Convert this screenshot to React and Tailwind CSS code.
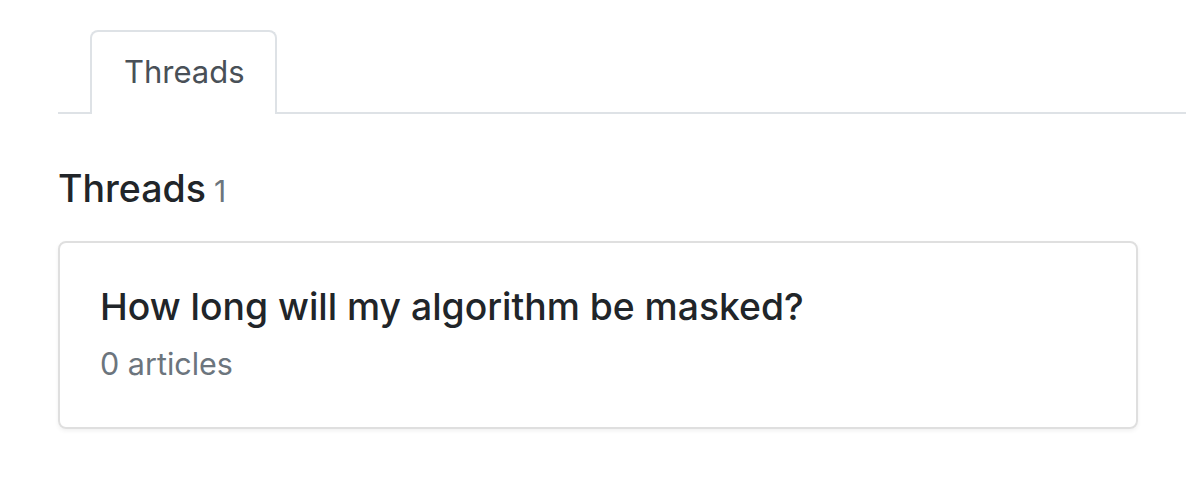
import React from 'react'

const threads = [{ title: 'How long will my algorithm be masked?', articles: 0 }]

const App = () => {
  return (
    <div className="w-[1186px] h-[484px] bg-white pl-[58px] pt-[30px] font-['Inter',sans-serif] text-[#212529]">
      <div className="flex border-b-2 border-[#dee2e6] pl-[32px]">
        <div className="-mb-[2px] pl-[32px] pr-[30px] pt-[16px] pb-[18px] border-2 border-b-0 border-[#dee2e6] rounded-t-[8px] bg-white text-[31px] leading-[48px] text-[#495057]">
          Threads
        </div>
      </div>

      <div className="pr-[48px]">
        <h5 className="mt-[51px] flex items-baseline gap-[8px] text-[37.5px] leading-[48px] font-medium">
          Threads <span className="text-[30px] font-normal text-[#6c757d]">{threads.length}</span>
        </h5>

        <div className="mt-[26px] space-y-4">
          {threads.map((t, i) => (
            <div key={i} className="rounded-[8px] border-2 border-[#dfdfdf] shadow-[0_2px_4px_rgba(0,0,0,0.06)] px-[40px] pt-[40px] pb-[42px]">
              <div className="text-[37.3px] leading-[48px] font-medium">{t.title}</div>
              <div className="mt-[12px] text-[30.5px] leading-[42px] text-[#6c757d]">{t.articles} articles</div>
            </div>
          ))}
        </div>
      </div>
    </div>
  )
}

export default App
